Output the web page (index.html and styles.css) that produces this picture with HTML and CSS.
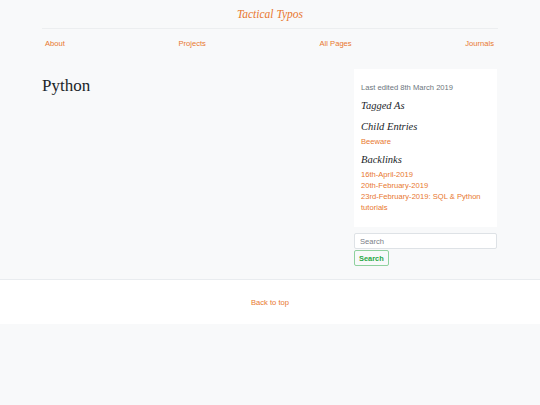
FILE: index.html
```html
<!DOCTYPE html>
<html>
<head>
<meta charset="utf-8">
<link rel="stylesheet" href="styles.css">
</head>
<body>
<div class="page">
  <header class="site-header">
    <div class="brand"><a href="#">Tactical Typos</a></div>
    <nav class="nav">
      <a href="#">About</a>
      <a href="#">Projects</a>
      <a href="#">All Pages</a>
      <a href="#">Journals</a>
    </nav>
  </header>
  <div class="layout">
    <main class="content">
      <h1>Python</h1>
    </main>
    <aside class="sidebar">
      <div class="card">
        <p class="meta">Last edited 8th March 2019</p>
        <h4>Tagged As</h4>
        <h4>Child Entries</h4>
        <ul class="links">
          <li><a href="#">Beeware</a></li>
        </ul>
        <h4>Backlinks</h4>
        <ul class="links">
          <li><a href="#">16th-April-2019</a></li>
          <li><a href="#">20th-February-2019</a></li>
          <li><a href="#">23rd-February-2019: SQL &amp; Python tutorials</a></li>
        </ul>
      </div>
      <form class="search">
        <input type="text" placeholder="Search">
        <button type="button">Search</button>
      </form>
    </aside>
  </div>
</div>
<footer class="footer">
  <a href="#">Back to top</a>
</footer>
</body>
</html>
```
FILE: styles.css
```css
html, body {
  margin: 0;
  padding: 0;
  background: #f8f9fa;
  font-family: "Liberation Sans", Arial, sans-serif;
  font-size: 7.6px;
  color: #212529;
}
a {
  color: #e8772f;
  text-decoration: none;
}
.page {
  width: 456px;
  margin: 0 auto;
}
.site-header {
  padding-top: 6px;
}
.brand {
  text-align: center;
  font-family: "Liberation Serif", "Times New Roman", serif;
  font-style: italic;
  font-size: 11.5px;
  line-height: 16px;
  padding-bottom: 6px;
  border-bottom: 1px solid #eceef0;
}
.nav {
  display: flex;
  justify-content: space-between;
  padding: 9px 4px 0 3px;
  line-height: 12px;
}
.layout {
  display: flex;
  justify-content: space-between;
  margin-top: 19px;
}
.content h1 {
  margin: 7px 0 0;
  font-family: "Liberation Serif", "Times New Roman", serif;
  font-weight: normal;
  font-size: 17px;
  line-height: 20px;
  color: #212529;
}
.sidebar {
  width: 143px;
  margin-right: 1px;
}
.card {
  background: #ffffff;
  padding: 14px 7px 14px;
}
.meta {
  margin: 0 0 5px;
  color: #6c757d;
  line-height: 10px;
}
.card h4 {
  margin: 4.5px 0 1.5px;
  font-family: "Liberation Serif", "Times New Roman", serif;
  font-style: italic;
  font-weight: normal;
  font-size: 10.5px;
  line-height: 16px;
  color: #212529;
}
.links {
  list-style: none;
  margin: 0 0 4.5px;
  padding: 0;
  line-height: 11px;
}
.links:last-child {
  margin-bottom: 0;
}
.search {
  margin: 6px 0 0;
  display: flex;
  flex-direction: column;
  align-items: flex-start;
}
.search input {
  box-sizing: border-box;
  width: 100%;
  height: 16px;
  margin: 0;
  padding: 0 5px;
  border: 1px solid #dee2e6;
  border-radius: 2px;
  background: #fff;
  font-family: "Liberation Sans", Arial, sans-serif;
  font-size: 7.6px;
  color: #495057;
}
.search input::placeholder {
  color: #7a8087;
}
.search button {
  box-sizing: border-box;
  height: 16px;
  margin: 1px 0 0;
  padding: 0 4px;
  border: 1px solid #8fd19e;
  border-radius: 2px;
  background: transparent;
  color: #28a745;
  font-family: "Liberation Sans", Arial, sans-serif;
  font-weight: bold;
  font-size: 7.4px;
}
.footer {
  margin-top: 13px;
  background: #ffffff;
  border-top: 1px solid #e9ecef;
  height: 44px;
  display: flex;
  align-items: center;
  justify-content: center;
}
```
